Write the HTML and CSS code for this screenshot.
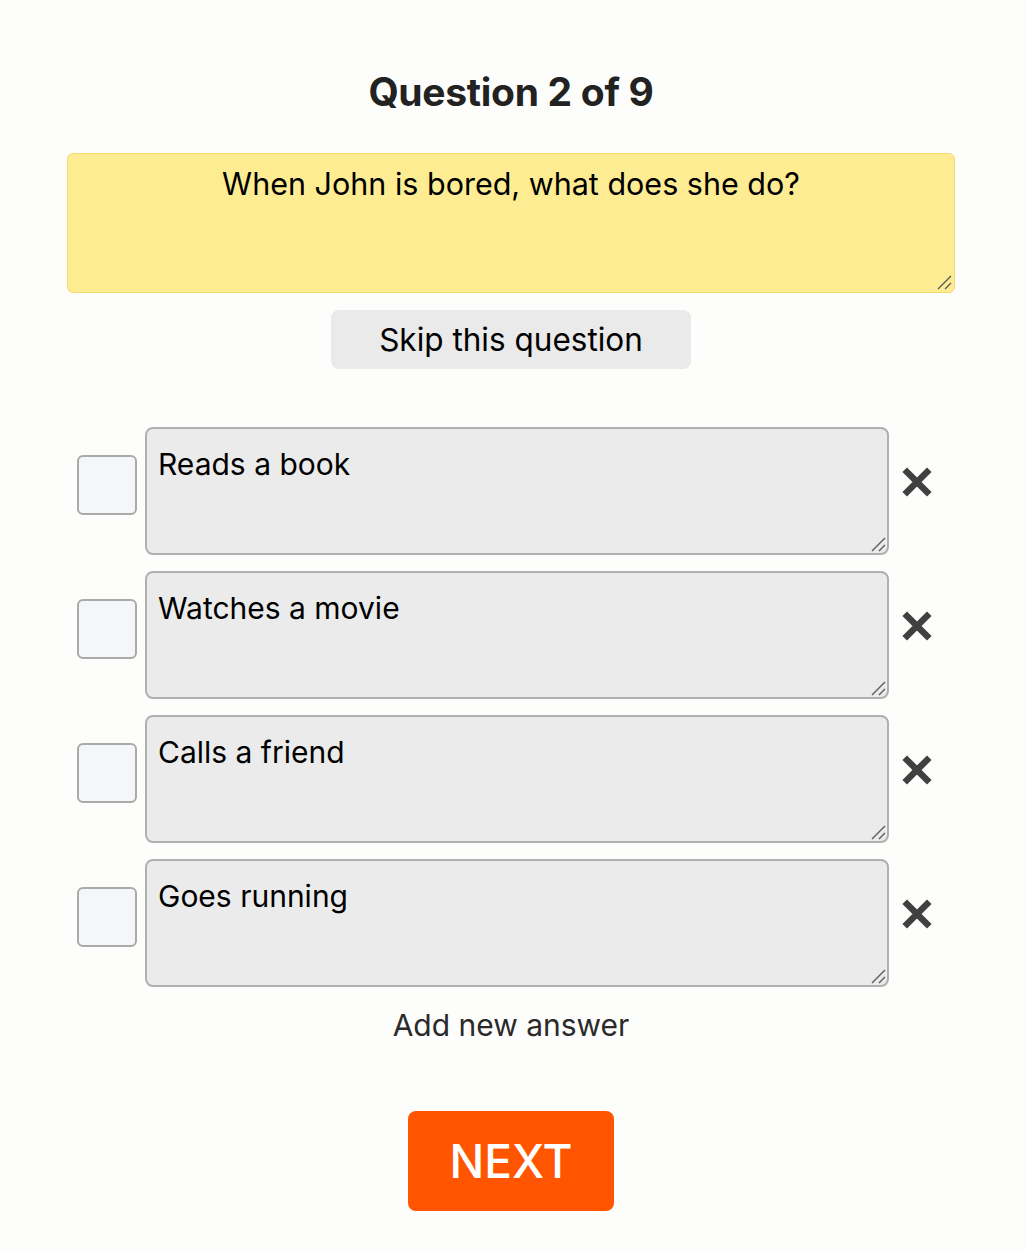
FILE: index.html
```html
<!DOCTYPE html>
<html>
<head>
<meta charset="utf-8">
<link rel="stylesheet" href="styles.css">
</head>
<body>
<main class="quiz">
  <h1 class="title">Question 2 of 9</h1>
  <div class="field question-field">
    <textarea class="question">When John is bored, what does she do?</textarea>
    <svg class="grip" viewBox="0 0 16 16" width="16" height="16"><path d="M2 15 L15 2 M9 15 L15 9" stroke="#5a5a5a" stroke-width="1.4"/></svg>
  </div>
  <div class="skip-wrap"><button class="skip">Skip this question</button></div>
  <div class="answers">
    <div class="answer">
      <span class="check"></span>
      <div class="field">
        <textarea class="answer-text">Reads a book</textarea>
        <svg class="grip" viewBox="0 0 16 16" width="16" height="16"><path d="M2 15 L15 2 M9 15 L15 9" stroke="#5a5a5a" stroke-width="1.4"/></svg>
      </div>
      <span class="remove"><svg viewBox="0 0 30 30" width="30" height="30"><path d="M5 5 L25 25 M25 5 L5 25" stroke="#404040" stroke-width="6.5" stroke-linecap="square" stroke-linejoin="round"/></svg></span>
    </div>
    <div class="answer">
      <span class="check"></span>
      <div class="field">
        <textarea class="answer-text">Watches a movie</textarea>
        <svg class="grip" viewBox="0 0 16 16" width="16" height="16"><path d="M2 15 L15 2 M9 15 L15 9" stroke="#5a5a5a" stroke-width="1.4"/></svg>
      </div>
      <span class="remove"><svg viewBox="0 0 30 30" width="30" height="30"><path d="M5 5 L25 25 M25 5 L5 25" stroke="#404040" stroke-width="6.5" stroke-linecap="square"/></svg></span>
    </div>
    <div class="answer">
      <span class="check"></span>
      <div class="field">
        <textarea class="answer-text">Calls a friend</textarea>
        <svg class="grip" viewBox="0 0 16 16" width="16" height="16"><path d="M2 15 L15 2 M9 15 L15 9" stroke="#5a5a5a" stroke-width="1.4"/></svg>
      </div>
      <span class="remove"><svg viewBox="0 0 30 30" width="30" height="30"><path d="M5 5 L25 25 M25 5 L5 25" stroke="#404040" stroke-width="6.5" stroke-linecap="square"/></svg></span>
    </div>
    <div class="answer">
      <span class="check"></span>
      <div class="field">
        <textarea class="answer-text">Goes running</textarea>
        <svg class="grip" viewBox="0 0 16 16" width="16" height="16"><path d="M2 15 L15 2 M9 15 L15 9" stroke="#5a5a5a" stroke-width="1.4"/></svg>
      </div>
      <span class="remove"><svg viewBox="0 0 30 30" width="30" height="30"><path d="M5 5 L25 25 M25 5 L5 25" stroke="#404040" stroke-width="6.5" stroke-linecap="square"/></svg></span>
    </div>
  </div>
  <div class="add">Add new answer</div>
  <div class="next-wrap"><button class="next">NEXT</button></div>
</main>
</body>
</html>
```
FILE: styles.css
```css
html, body {
  margin: 0;
  padding: 0;
  background: #fdfdfb;
}
body {
  font-family: Inter, "Liberation Sans", sans-serif;
  color: #000;
}
.quiz {
  width: 888px;
  margin: 0 0 0 67px;
  padding-top: 64px;
  display: flex;
  flex-direction: column;
}
.title {
  margin: 0;
  text-align: center;
  font-size: 39px;
  line-height: 56px;
  font-weight: 700;
  color: #222;
  letter-spacing: -0.3px;
}
.field {
  position: relative;
  flex: none;
}
.grip {
  position: absolute;
  right: 3px;
  bottom: 3px;
  pointer-events: none;
}
.question-field {
  margin-top: 33px;
}
.question {
  display: block;
  box-sizing: border-box;
  width: 888px;
  height: 140px;
  background: #fdec92;
  border: 1px solid #f3dc6e;
  border-radius: 6px;
  font-family: Inter, "Liberation Sans", sans-serif;
  font-size: 30.5px;
  line-height: 36px;
  text-align: center;
  padding: 12px 20px;
  color: #000;
  outline: none;
  resize: none;
}
.skip-wrap {
  display: flex;
  justify-content: center;
  margin-top: 17px;
}
.skip {
  width: 360px;
  height: 59px;
  background: #eaeaea;
  border: none;
  border-radius: 8px;
  font-family: Inter, "Liberation Sans", sans-serif;
  font-size: 31.5px;
  color: #000;
  padding: 0;
}
.answers {
  margin-top: 58px;
  display: flex;
  flex-direction: column;
  gap: 16px;
}
.answer {
  display: flex;
  align-items: flex-start;
  padding-left: 10px;
}
.answer .field {
  margin-left: 8px;
}
.check {
  box-sizing: border-box;
  width: 60px;
  height: 60px;
  margin-top: 28px;
  border: 2px solid #aaaaaa;
  border-radius: 6px;
  background: #f5f6f7;
  flex: none;
}
.answer-text {
  display: block;
  box-sizing: border-box;
  margin: 0;
  width: 744px;
  height: 128px;
  background: #ebebeb;
  border: 2px solid #b0b0b0;
  border-radius: 8px;
  font-family: Inter, "Liberation Sans", sans-serif;
  font-size: 30px;
  line-height: 36px;
  padding: 17px 11px;
  color: #000;
  outline: none;
  resize: none;
}
.remove {
  display: block;
  width: 30px;
  height: 30px;
  margin-left: 13px;
  margin-top: 40px;
  flex: none;
}
.remove svg { display: block; }
.add {
  margin-top: 20px;
  text-align: center;
  font-size: 30px;
  line-height: 36px;
  color: #2a2a2a;
}
.next-wrap {
  display: flex;
  justify-content: center;
  margin-top: 68px;
}
.next {
  width: 206px;
  height: 100px;
  background: #ff5500;
  border: none;
  border-radius: 8px;
  color: #fff;
  font-family: Inter, "Liberation Sans", sans-serif;
  font-size: 46px;
  font-weight: 500;
  padding: 0;
}
```
